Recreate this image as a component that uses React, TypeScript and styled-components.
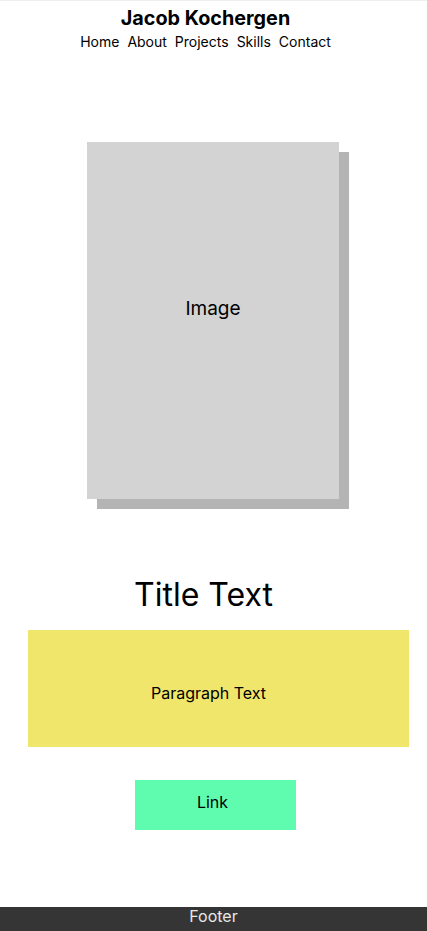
import React from "react";
import styled, { createGlobalStyle } from "styled-components";

const Global = createGlobalStyle`
  html, body { margin: 0; padding: 0; background: #fff; }
  body { font-family: Inter, "Noto Sans", sans-serif; color: #000; }
`;

const Page = styled.div`
  min-height: 931px;
  display: flex;
  flex-direction: column;
  border-top: 1px solid #eeeeee;
  box-sizing: border-box;
`;

const Header = styled.header`
  display: flex;
  flex-direction: column;
  align-items: center;
  padding-top: 6px;
  padding-right: 16px;
`;

const Name = styled.h1`
  margin: 0;
  font-size: 19.8px;
  font-weight: 700;
  line-height: 23px;
`;

const Nav = styled.nav`
  display: flex;
  gap: 8px;
  margin-top: 2px;
`;

const NavLink = styled.a`
  font-size: 14px;
  line-height: 20px;
  color: #000;
  text-decoration: none;
`;

const Main = styled.main`
  flex: 1;
  display: flex;
  flex-direction: column;
  align-items: center;
`;

const ImageWrap = styled.div`
  margin-top: 90px;
  width: 252px;
  height: 357px;
  background: #d3d3d3;
  box-shadow: 10px 10px 0 #b4b4b4;
  display: flex;
  align-items: center;
  justify-content: center;
  font-size: 19px;
  margin-right: 1px;
  padding-bottom: 24px;
  box-sizing: border-box;
`;

const Title = styled.h2`
  margin: 76px 20px 0 0;
  font-size: 32px;
  font-weight: 400;
  line-height: 40px;
`;

const Paragraph = styled.p`
  margin: 15px 0 0 10px;
  width: 381px;
  height: 117px;
  background: #f0e66b;
  display: flex;
  align-items: center;
  justify-content: center;
  font-size: 16px;
  padding-right: 20px;
  padding-top: 8px;
  box-sizing: border-box;
`;

const LinkButton = styled.a`
  margin-top: 33px;
  margin-left: 4px;
  width: 161px;
  height: 50px;
  background: #5ffcb0;
  color: #000;
  text-decoration: none;
  display: flex;
  justify-content: center;
  padding-top: 14px;
  box-sizing: border-box;
  font-size: 16px;
  line-height: 16px;
  padding-right: 6px;
`;

const Footer = styled.footer`
  height: 24px;
  background: #353535;
  color: #e8e8e8;
  display: flex;
  justify-content: center;
  align-items: flex-start;
  font-size: 16px;
  line-height: 18px;
`;

export default function App() {
  return (
    <>
      <Global />
      <Page>
        <Header>
          <Name>Jacob Kochergen</Name>
          <Nav>
            <NavLink href="#">Home</NavLink>
            <NavLink href="#">About</NavLink>
            <NavLink href="#">Projects</NavLink>
            <NavLink href="#">Skills</NavLink>
            <NavLink href="#">Contact</NavLink>
          </Nav>
        </Header>
        <Main>
          <ImageWrap>Image</ImageWrap>
          <Title>Title Text</Title>
          <Paragraph>Paragraph Text</Paragraph>
          <LinkButton href="#">Link</LinkButton>
        </Main>
        <Footer>Footer</Footer>
      </Page>
    </>
  );
}
